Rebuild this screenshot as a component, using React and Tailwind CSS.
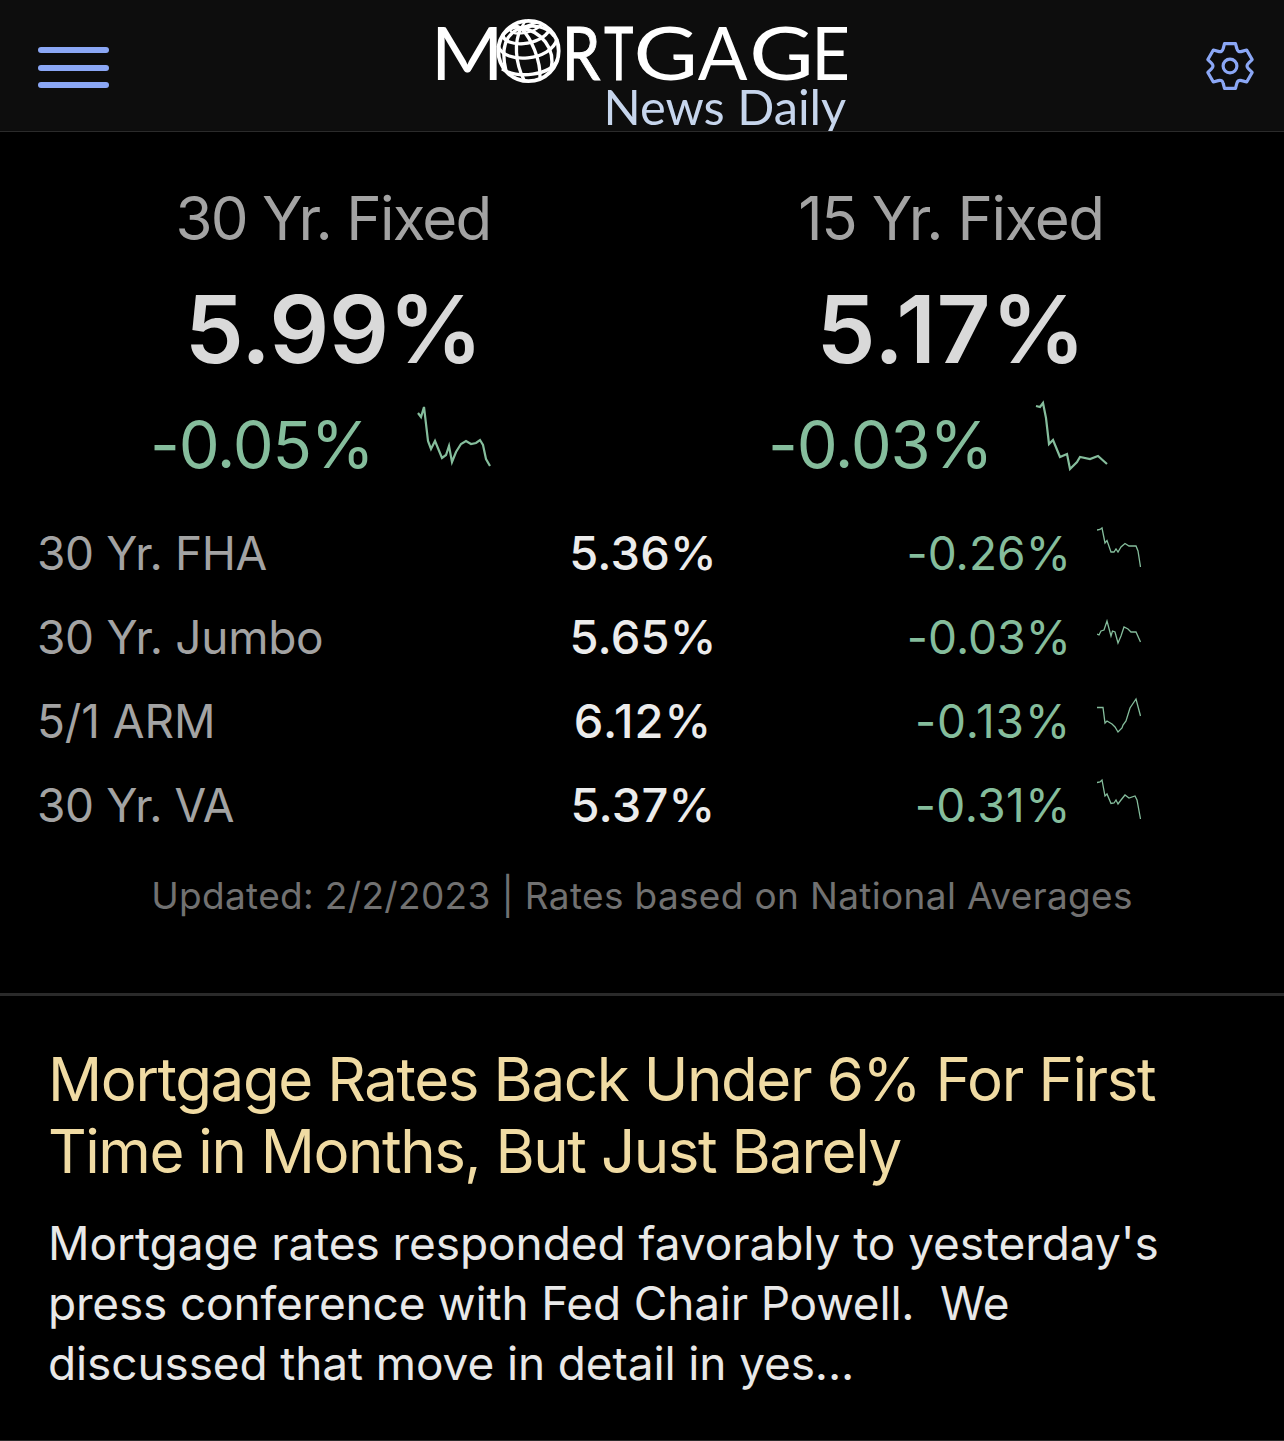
import React from "react";

// featured rates, big columns on top
const featured = [
  {
    name: "30 Yr. Fixed",
    rate: "5.99%",
    change: "-0.05%",
    nameClass: "tracking-[-1.77px]",
    rateClass: "tracking-[-0.6px]",
    points: "0,13 3,17 6,7 10,41 13,49 17,41 24,58 28,55 31,46 34,62 38,52 43,44 48,41 53,44 58,43 62,40 65,45 68,59 72,66",
  },
  {
    name: "15 Yr. Fixed",
    rate: "5.17%",
    change: "-0.03%",
    nameClass: "tracking-[-1.4px]",
    rateClass: "tracking-[0.6px]",
    points: "0,6 4,7 7,3 10,18 13,44 17,40 24,57 31,54 34,69 41,62 44,57 54,59 62,56 71,64",
  },
];

const rates = [
  {
    name: "30 Yr. FHA",
    rate: "5.36%",
    change: "-0.26%",
    nameClass: "tracking-[-0.35px]",
    rateClass: "tracking-[0.2px]",
    changeClass: "tracking-[0.1px]",
    points: "0,19 3,18.5 5,17 8,32 10,29.5 14,41 17,41 19,38 21,41 24,36 28,32.5 32,35 39,35 41,40 43.5,56",
  },
  {
    name: "30 Yr. Jumbo",
    rate: "5.65%",
    change: "-0.03%",
    nameClass: "tracking-[-0.3px]",
    rateClass: "tracking-[0.2px]",
    changeClass: "tracking-[0.1px]",
    points: "0,39 2,40 4,36 7,35 10,26 14,41 15.5,36 18,37 21,48 24,41 27,32 31,34 34,37 39,37 43.5,47",
  },
  {
    name: "5/1 ARM",
    rate: "6.12%",
    change: "-0.13%",
    nameClass: "tracking-[-0.1px]",
    rateClass: "tracking-[1px]",
    changeClass: "tracking-[0.9px]",
    points: "0,28.5 6,28.5 8,44 10,42 15,45 18,48 21,53 25,49 26,46 29,42 33,29 37,23 39,20 43.5,37",
  },
  {
    name: "30 Yr. VA",
    rate: "5.37%",
    change: "-0.31%",
    nameClass: "tracking-[-0.4px]",
    rateClass: "tracking-[0.2px]",
    changeClass: "tracking-[0.5px]",
    points: "0,19.5 3,19 5,17 8,33 10,31 14,40.5 17,40 19,37 21,41 24,37 28,32 32,35 38,33 40,37 43.5,56",
  },
];

// x = left origin, sx = horizontal stretch of each letter
const logoLetters = [
  { char: "M", x: 430.8, sx: 1.07, weight: 0 },
  { char: "R", x: 561.8, sx: 0.84, weight: 0.9 },
  { char: "T", x: 604.2, sx: 0.67, weight: 1.2 },
  { char: "G", x: 633.6, sx: 1.2, weight: 0 },
  { char: "A", x: 697.7, sx: 1.0, weight: 0 },
  { char: "G", x: 749.2, sx: 1.2, weight: 0 },
  { char: "E", x: 811.2, sx: 0.94, weight: 0 },
];

const Logo = () => (
  <svg className="h-[131px] w-[411px]" viewBox="436 0 411 131" role="img" aria-label="Mortgage News Daily">
    <g fill="#fff" stroke="#fff" fontFamily="Lato, sans-serif" fontSize="73.5">
      {logoLetters.map((l, i) => (
        <text key={i} strokeWidth={l.weight} transform={`translate(${l.x} 79.5) scale(${l.sx} 1)`}>{l.char}</text>
      ))}
    </g>

    {/* globe */}
    <circle cx="528.5" cy="51" r="31.8" fill="#0d0d0d" />
    <g fill="none" stroke="#fff" strokeWidth="3.3">
      <circle cx="528.5" cy="51" r="30.2" strokeWidth="3.8" />
      {/* parallels */}
      <path d="M510 30 C513 36 533 34 541 25" strokeWidth="2.4" />
      <path d="M503 35 C504 48 541 47 550 29" />
      <path d="M498 46 C505 65 551 61 557 39" />
      <path d="M502 69 C516 79 551 76 558 59" />
      {/* meridians */}
      <path d="M521 28 C507 33 500 46 506 71" />
      <path d="M521 28 C514 42 515 62 524 80" />
      <path d="M521 28 C531 38 541 60 540 79" />
      <path d="M521 28 C541 31 556 48 551 70" />
      <path d="M521 28 C533 24 546 26 554 36" />
      <path d="M521 28 C516 26 509 28 502 36" />
      <path d="M521 28 L526 20 M521 28 L538 22 M521 28 L514 24" strokeWidth="2.4" />
    </g>

    <text x="603.4" y="125.3" fill="#c6d5ec" fontFamily="Lato, sans-serif" fontSize="48.8">News Daily</text>
  </svg>
);

const gearTooth = "L-5.5 -22.4 L5.5 -22.4 L6.8 -17.5 C7.4 -14.8 9.1 -13.8 11.8 -14.6";

const rotatePoint = (x, y, deg) => {
  const a = (deg * Math.PI) / 180;
  return `${(x * Math.cos(a) - y * Math.sin(a)).toFixed(2)} ${(x * Math.sin(a) + y * Math.cos(a)).toFixed(2)}`;
};

const gearPath =
  [0, 60, 120, 180, 240, 300]
    .map((deg) => gearTooth.replace(/(-?[\d.]+) (-?[\d.]+)/g, (_, x, y) => rotatePoint(+x, +y, deg)))
    .join(" ")
    .replace("L", "M") + "Z";

const Header = () => (
  <header className="flex h-[132px] items-start justify-between border-b border-[#2b2b2b] bg-[#0d0d0d] pr-[29px] pl-[38px]">
    <button className="mt-[47px] flex w-[71px] flex-col gap-[11.5px]" aria-label="Menu">
      <span className="h-[6px] w-full rounded-full bg-[#8ba7f5]" />
      <span className="h-[6px] w-full rounded-full bg-[#8ba7f5]" />
      <span className="h-[6px] w-full rounded-full bg-[#8ba7f5]" />
    </button>
    <div className="mr-[31px]">
      <Logo />
    </div>
    <button className="mt-[41px]" aria-label="Settings">
      <svg className="size-[50px]" viewBox="-25 -25 50 50" fill="none" stroke="#8ba7f5" strokeWidth="3.2" strokeLinejoin="round">
        <path d={gearPath} />
        <circle r="6.9" />
      </svg>
    </button>
  </header>
);

const FeaturedRate = ({ rate }) => (
  <div>
    <h2 className={`text-center text-[60px] leading-[72px] text-[#a3a3a3] ${rate.nameClass}`}>{rate.name}</h2>
    <p className={`mt-[19px] pl-px text-center text-[94px] leading-[112px] font-semibold text-[#d9d9d9] ${rate.rateClass}`}>{rate.rate}</p>
    <div className="mt-5 flex pl-[126px]">
      <span className="w-[268px] text-[65px] leading-[79px] tracking-[-1.2px] text-[#85bd9c]">{rate.change}</span>
      <svg className="h-[78px] w-[72px] overflow-visible" viewBox="0 5 72 78" fill="none" stroke="#85bd9c" strokeWidth="2.2">
        <polyline points={rate.points} />
      </svg>
    </div>
  </div>
);

const RateRow = ({ rate }) => (
  <div className="flex h-[84px] items-center pl-[37px] text-[46px]">
    <span className={`w-[496px] text-[#a3a3a3] ${rate.nameClass}`}>{rate.name}</span>
    <span className={`w-[220px] text-center text-[47px] font-medium text-[#ececec] ${rate.rateClass}`}>{rate.rate}</span>
    <span className={`w-[318px] text-right text-[#85bd9c] ${rate.changeClass}`}>{rate.change}</span>
    <svg className="ml-[26px] h-[84px] w-[44px]" viewBox="0 0 44 84" fill="none" stroke="#85bd9c" strokeWidth="1.3">
      <polyline points={rate.points} />
    </svg>
  </div>
);

export default function App() {
  return (
    <div className="flex h-[1441px] w-[1284px] flex-col overflow-hidden border-b border-[#2b2b2b] bg-black font-['Inter',sans-serif]">
      <Header />

      <section className="border-b-[3px] border-[#2a2a2a] pt-[50px] pb-[75px]">
        <div className="grid grid-cols-2 px-6">
          {featured.map((rate) => (
            <FeaturedRate key={rate.name} rate={rate} />
          ))}
        </div>
        <div className="mt-[27px]">
          {rates.map((rate) => (
            <RateRow key={rate.name} rate={rate} />
          ))}
        </div>
        <p className="mt-[27px] text-center text-[37px] leading-[44px] tracking-[0.34px] text-[#717171]">
          Updated: 2/2/2023 | Rates based on National Averages
        </p>
      </section>

      <article className="pt-[47px] pl-[48px] whitespace-nowrap">
        <h1 className="text-[60px] leading-[72px] tracking-[-1.39px] text-[#f0dba3]">
          Mortgage Rates Back Under 6% For First
          <br />
          <span className="tracking-[-1.47px]">Time in Months, But Just Barely</span>
        </h1>
        <p className="mt-[26px] text-[46px] leading-[60px] tracking-[-0.07px] text-[#e8e8e8]">
          Mortgage rates responded favorably to yesterday's
          <br />
          <span className="tracking-[-0.18px]">press conference with Fed Chair Powell. &nbsp;We</span>
          <br />
          <span className="tracking-[-0.12px]">discussed that move in detail in yes...</span>
        </p>
      </article>
    </div>
  );
}
